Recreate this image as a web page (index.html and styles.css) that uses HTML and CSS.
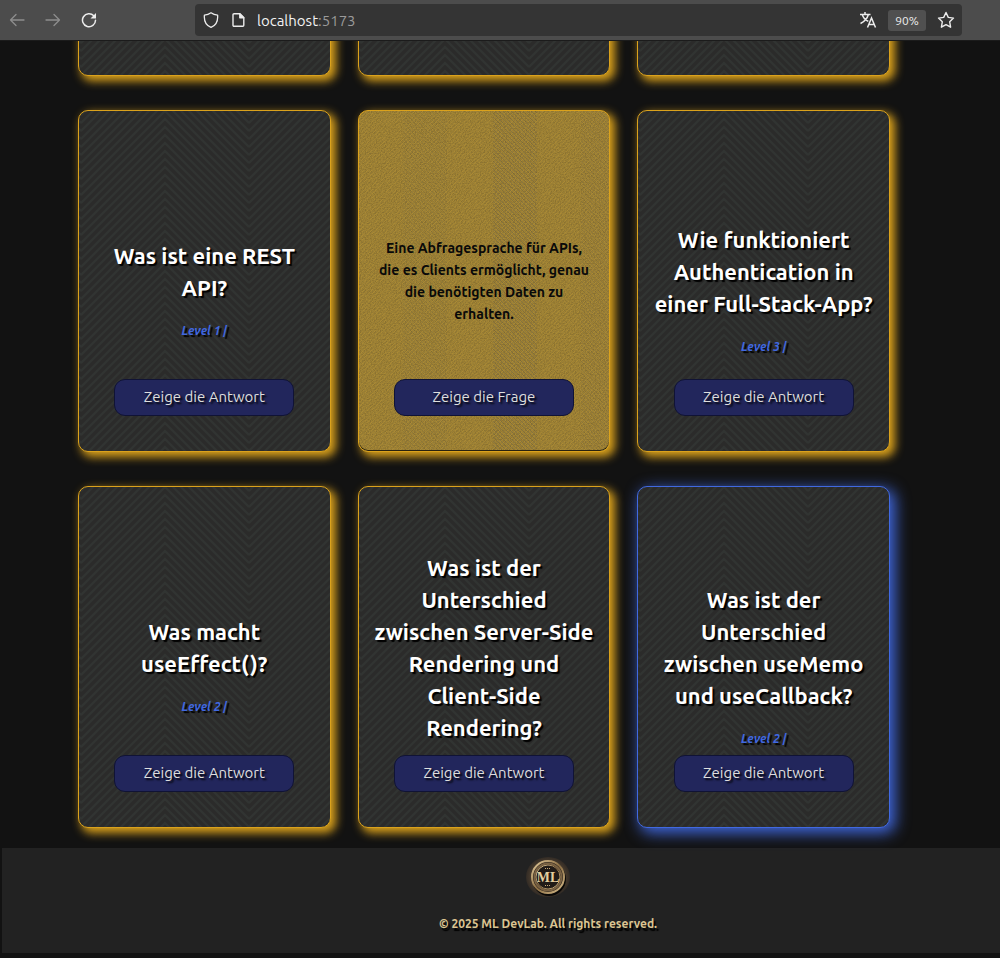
FILE: index.html
```html
<!DOCTYPE html>
<html lang="de">
<head>
<meta charset="utf-8">
<meta name="viewport" content="width=device-width, initial-scale=1">
<title>ML DevLab</title>
<link rel="stylesheet" href="styles.css">
</head>
<body>
<header class="toolbar">
  <nav class="nav-buttons" aria-label="Navigation">
    <button class="icon-button muted" type="button" aria-label="Zurück">
      <svg width="16" height="16" viewBox="0 0 16 16" fill="none" stroke="currentColor" stroke-width="1.3" stroke-linecap="round" stroke-linejoin="round"><path d="M15 8H1.500M7 2.500 1.500 8 7 13.500"/></svg>
    </button>
    <button class="icon-button muted" type="button" aria-label="Vor">
      <svg width="16" height="16" viewBox="0 0 16 16" fill="none" stroke="currentColor" stroke-width="1.3" stroke-linecap="round" stroke-linejoin="round"><path d="M1 8h13.500M9 2.500 14.500 8 9 13.500"/></svg>
    </button>
    <button class="icon-button" type="button" aria-label="Neu laden">
      <svg width="16" height="16" viewBox="0 0 16 16"><path d="M12.800 3.800A6.500 6.500 0 1 0 14.500 8.200" fill="none" stroke="currentColor" stroke-width="1.500" stroke-linecap="round"/><path d="M15 1v5.500H9.500Z" fill="currentColor"/></svg>
    </button>
  </nav>
  <div class="address-bar">
    <svg width="16" height="16" viewBox="0 0 16 16" fill="none" stroke="currentColor" stroke-width="1.300" stroke-linejoin="round"><path d="M8 .8C10 2.300 12.300 3 14.600 3.100 15.100 8.800 12.700 13.500 8 15.300 3.300 13.500.9 8.800 1.400 3.100 3.700 3 6 2.300 8 .8Z"/></svg>
    <svg width="16" height="16" viewBox="0 0 16 16" fill="none" stroke="currentColor" stroke-width="1.400" stroke-linejoin="round"><path d="M4 1.700h5.800l4 4v7.600a1 1 0 0 1-1 1H4a1 1 0 0 1-1-1V2.700a1 1 0 0 1 1-1Z"/><path d="M9.800 1.700v4h4Z" fill="currentColor"/></svg>
    <a class="url" href="#">localhost<span class="port">:5173</span></a>
    <button class="icon-button" type="button" aria-label="Übersetzen">
      <svg width="18" height="18" viewBox="0 0 18 18" fill="none" stroke="currentColor" stroke-width="1.500"><path d="M1 3.500h10.500M6 1v2.500M3.300 3.700c1 3 3.200 5.300 6 6.700M9.300 3.700C8.300 7.200 5.500 10.500 1.500 12.500M8.500 16.500l4-9.500 4 9.500M9.800 13.500h5.400"/></svg>
    </button>
    <button class="zoom-level" type="button">90%</button>
    <button class="icon-button" type="button" aria-label="Lesezeichen">
      <svg width="18" height="18" viewBox="0 0 18 18" fill="none" stroke="currentColor" stroke-width="1.400" stroke-linejoin="round"><path d="m9 1.500 2.300 4.900 5.200.7-3.800 3.700.9 5.400L9 13.600l-4.600 2.600.9-5.400L1.500 7.100l5.200-.7Z"/></svg>
    </button>
  </div>
</header>
<main class="viewport">
  <section class="cards">
    <article class="card"></article>
    <article class="card"></article>
    <article class="card"></article>

    <article class="card">
      <div class="body"><h2 class="question">Was ist eine REST API?</h2><p class="level">Level 1 |</p></div>
      <button class="flip" type="button">Zeige die Antwort</button>
    </article>
    <article class="card answer-side">
      <div class="body"><p class="answer">Eine Abfragesprache für APIs, die es Clients ermöglicht, genau die benötigten Daten zu erhalten.</p></div>
      <button class="flip" type="button">Zeige die Frage</button>
    </article>
    <article class="card">
      <div class="body"><h2 class="question">Wie funktioniert Authentication in einer Full-Stack-App?</h2><p class="level">Level 3 |</p></div>
      <button class="flip" type="button">Zeige die Antwort</button>
    </article>

    <article class="card">
      <div class="body"><h2 class="question">Was macht useEffect()?</h2><p class="level">Level 2 |</p></div>
      <button class="flip" type="button">Zeige die Antwort</button>
    </article>
    <article class="card">
      <div class="body tall"><h2 class="question">Was ist der Unterschied zwischen Server-Side Rendering und Client-Side Rendering?</h2></div>
      <button class="flip" type="button">Zeige die Antwort</button>
    </article>
    <article class="card active">
      <div class="body"><h2 class="question">Was ist der Unterschied zwischen useMemo und useCallback?</h2><p class="level">Level 2 |</p></div>
      <button class="flip" type="button">Zeige die Antwort</button>
    </article>
  </section>
  <footer class="footer">
    <svg class="logo" width="48" height="44" viewBox="0 0 48 44" role="img" aria-label="ML">
      <defs>
        <linearGradient id="gold" x1="0" y1="0" x2="1" y2="1"><stop offset="0" stop-color="#e8cf9e"/><stop offset=".5" stop-color="#8a6d43"/><stop offset="1" stop-color="#d8bd8b"/></linearGradient>
        <radialGradient id="glow"><stop offset=".75" stop-color="#4a3d2e"/><stop offset="1" stop-color="#322b25"/></radialGradient>
      </defs>
      <ellipse cx="24" cy="22" rx="22" ry="20" fill="url(#glow)"/>
      <circle cx="25" cy="24" r="17" fill="#090807"/>
      <circle cx="24" cy="22" r="16" fill="#2b231b" stroke="url(#gold)" stroke-width="2"/>
      <circle cx="24" cy="22" r="13.500" fill="none" stroke="#7a6243" stroke-width="2"/>
      <circle cx="24" cy="22" r="12" fill="#211b17" stroke="url(#gold)" stroke-width="1"/>
      <text class="monogram" x="24" y="27" text-anchor="middle">ML</text>
      <path d="M21 13.500h6M21 30.500h6" stroke="#c7aa78" stroke-dasharray="1 1"/>
    </svg>
    <p class="copyright">© 2025 ML DevLab. All rights reserved.</p>
  </footer>
</main>
</body>
</html>
```
FILE: styles.css
```css
* { box-sizing: border-box; }

body {
  margin: 0;
  min-height: 100vh;
  background: #121212;
  color: #fff;
  font-family: Ubuntu, "Noto Sans", "Open Sans", sans-serif;
}

button { font: inherit; color: inherit; cursor: pointer; }
h2, p { margin: 0; }

.toolbar {
  position: relative;
  z-index: 1;
  display: flex;
  align-items: center;
  height: 41px;
  padding: 0 38px 0 9px;
  background: #4c4c4c;
  border-bottom: 1px solid #1b1b1b;
}

.nav-buttons { display: flex; gap: 20px; width: 186px; }

.icon-button {
  display: flex;
  padding: 0;
  border: 0;
  background: none;
  color: #ececec;
}

.muted { color: #8d8d8d; }

.address-bar {
  display: flex;
  flex: 1;
  align-items: center;
  gap: 11px;
  height: 32px;
  padding: 0 7px 0 8px;
  border-radius: 4px;
  background: #343434;
  color: #ececec;
}

.url {
  flex: 1;
  color: #f2f2f2;
  font-size: 15px;
  text-decoration: none;
}

.port { color: #9a9a9a; }

.zoom-level {
  height: 21px;
  width: 38px;
  padding: 0;
  border: 0;
  border-radius: 3px;
  background: #505050;
  font-size: 12px;
}

.viewport { overflow: hidden; }

.cards {
  display: grid;
  grid-template-columns: repeat(3, 1fr);
  grid-auto-rows: 342px;
  gap: 34px 27px;
  margin-top: -307px;
  padding: 0 110px 20px 78px;
}

.card {
  display: flex;
  flex-direction: column;
  align-items: center;
  padding: 90px 15px 35px;
  border: 1px solid #dba21c;
  border-radius: 10px;
  background: #2b2b2a url("data:image/svg+xml,%3Csvg xmlns='http://www.w3.org/2000/svg' width='168' height='8'%3E%3Cpath d='M0 4L84-80L168 4M0 12L84-72L168 12M0 20L84-64L168 20M0 28L84-56L168 28M0 36L84-48L168 36M0 44L84-40L168 44M0 52L84-32L168 52M0 60L84-24L168 60M0 68L84-16L168 68M0 76L84-8L168 76M0 84L84 0L168 84M0 92L84 8L168 92' fill='none' stroke='%23313432' stroke-width='2'/%3E%3C/svg%3E") 2px 0;
  box-shadow: 4px 4px 10px 1px #dba21c;
  text-align: center;
}

.active {
  border-color: #4169e1;
  box-shadow: 4px 4px 15px 1px #4169e1;
}

.answer-side {
  background: #9f8336 url("data:image/svg+xml,%3Csvg xmlns='http://www.w3.org/2000/svg' width='264' height='176'%3E%3Cdefs%3E%3Cpattern id='a' width='4' height='4' patternUnits='userSpaceOnUse'%3E%3Cpath d='M0 3h1v1H0zM1 2h1v1H1zM2 1h1v1H2zM3 0h1v1H3z' fill='%23ac8b34'/%3E%3C/pattern%3E%3Cpattern id='b' width='4' height='4' patternUnits='userSpaceOnUse'%3E%3Cpath d='M0 0h1v1H0zM1 1h1v1H1zM2 2h1v1H2zM3 3h1v1H3z' fill='%23887541'/%3E%3C/pattern%3E%3Cfilter id='n' x='0' y='0' width='1' height='1' color-interpolation-filters='sRGB'%3E%3CfeTurbulence type='fractalNoise' baseFrequency='.8' numOctaves='2' stitchTiles='stitch'/%3E%3CfeColorMatrix values='0 0 0 0 .35 0 0 0 0 .28 0 0 0 0 .12 3 0 0 0 -1.2'/%3E%3C/filter%3E%3C/defs%3E%3Cpath d='M0 0h264v176H0z' fill='url(%23a)'/%3E%3Cpath d='M44 0h44v176H44z' fill='url(%23b)' opacity='.5'/%3E%3Cpath d='M134 0h44v176h-44z' fill='url(%23b)'/%3E%3Cpath d='M222 0h42v176h-42z' fill='url(%23b)' opacity='.6'/%3E%3Cpath d='M0 0h264v176H0z' filter='url(%23n)' opacity='.3'/%3E%3C/svg%3E");
  box-shadow: inset 0 -1px #28220f, 4px 4px 10px 1px #dba21c;
}

.body {
  display: flex;
  flex: 1;
  flex-direction: column;
  justify-content: center;
  gap: 18px;
  min-height: 0;
}

.question {
  font-size: 22px;
  font-weight: 600;
  line-height: 32px;
  text-shadow: 2px 2px 1px #000;
}

.level {
  color: #4169e1;
  font-size: 12px;
  font-style: italic;
  font-weight: 600;
  line-height: 18px;
  text-shadow: 2px 2px 1px #000;
}

.tall { padding-bottom: 36px; }

.answer {
  padding: 0 2px;
  color: #090909;
  font-size: 14px;
  font-weight: 600;
  line-height: 22px;
}

.answer-side .body { padding-bottom: 18px; }

.flip {
  flex: none;
  width: 180px;
  height: 37px;
  padding: 0 0 2px;
  border: 1px solid #101335;
  border-radius: 11px;
  background: #22265c;
  color: #dedede;
  font-size: 15px;
  text-shadow: 2px 2px 2px #000;
}

.footer {
  display: flex;
  flex-direction: column;
  align-items: center;
  gap: 17px;
  height: 105px;
  margin-left: 2px;
  padding: 7px 0 0 94px;
  background: #222;
}

.logo { display: block; }

.monogram {
  fill: #e5cf9f;
  font-family: "Liberation Serif", serif;
  font-size: 14px;
  font-weight: 700;
}

.copyright {
  color: #dcc592;
  font-size: 12px;
  font-weight: 600;
  line-height: 16px;
  text-shadow: 2px 3px 1px #000;
}
```
